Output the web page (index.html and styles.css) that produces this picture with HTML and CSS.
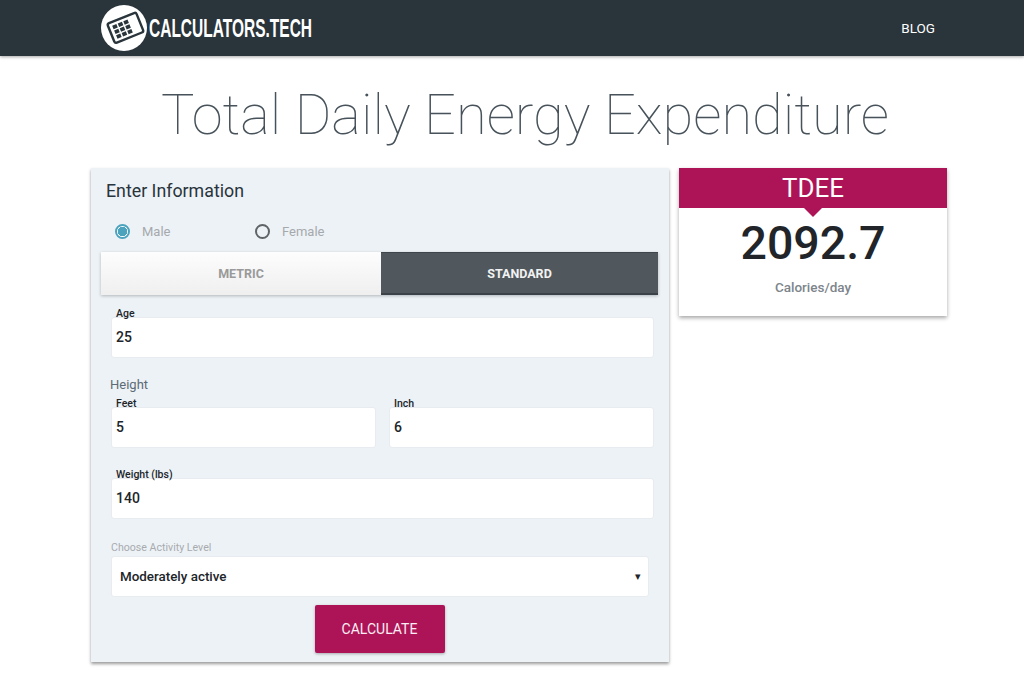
FILE: index.html
```html
<!DOCTYPE html>
<html lang="en">
<head>
  <meta charset="UTF-8">
  <meta name="viewport" content="width=device-width, initial-scale=1.0">
  <title>Total Daily Energy Expenditure</title>
  <link rel="stylesheet" href="styles.css">
</head>
<body>
  <!-- Top bar -->
  <header class="topbar">
    <a class="logo" href="#">
      <svg class="logo-icon" viewBox="0 0 46 46" width="46" height="46">
        <circle cx="23" cy="23" r="23" fill="#fff"/>
        <g transform="rotate(-22 24 23)">
          <rect x="9" y="12.5" width="31" height="21" rx="2" fill="none" stroke="#29343b" stroke-width="2.4"/>
          <g fill="#29343b">
            <rect x="13" y="16" width="4.5" height="3.8"/>
            <rect x="19" y="16" width="4.5" height="3.8"/>
            <rect x="25" y="16" width="4.5" height="3.8"/>
            <rect x="13" y="21.2" width="4.5" height="3.8"/>
            <rect x="19" y="21.2" width="4.5" height="3.8"/>
            <rect x="25" y="21.2" width="4.5" height="3.8"/>
            <rect x="13" y="26.4" width="4.5" height="3.8"/>
            <rect x="19" y="26.4" width="4.5" height="3.8"/>
            <rect x="25" y="26.4" width="4.5" height="3.8"/>
          </g>
        </g>
      </svg>
      <span class="logo-text">CALCULATORS.TECH</span>
    </a>
    <a class="nav-link" href="#">BLOG</a>
  </header>

  <h1 class="page-title">Total Daily Energy Expenditure</h1>

  <main class="columns">
    <!-- Form -->
    <section class="form-card">
      <h2 class="form-title">Enter Information</h2>
      <div class="gender-row">
        <label class="radio-item"><span class="radio radio-on"></span>Male</label>
        <label class="radio-item"><span class="radio"></span>Female</label>
      </div>
      <div class="unit-tabs">
        <button class="unit-tab">METRIC</button>
        <button class="unit-tab active">STANDARD</button>
      </div>

      <div class="field field-age">
        <label>Age</label>
        <input type="text" value="25">
      </div>

      <p class="group-label">Height</p>
      <div class="field-pair">
        <div class="field">
          <label>Feet</label>
          <input type="text" value="5">
        </div>
        <div class="field">
          <label>Inch</label>
          <input type="text" value="6">
        </div>
      </div>

      <div class="field field-weight">
        <label>Weight (lbs)</label>
        <input type="text" value="140">
      </div>

      <p class="select-label">Choose Activity Level</p>
      <div class="select-box">
        <span>Moderately active</span>
        <span class="select-arrow">▾</span>
      </div>

      <button class="btn-calc">CALCULATE</button>
    </section>

    <!-- Result -->
    <section class="result-card">
      <div class="result-head">TDEE</div>
      <div class="result-value">2092.7</div>
      <div class="result-unit">Calories/day</div>
    </section>
  </main>
</body>
</html>
```

FILE: styles.css
```css
* {
  box-sizing: border-box;
}
body {
  margin: 0;
  background: #fff;
  font-family: Roboto, sans-serif;
  color: #212529;
}
/* Top bar */
.topbar {
  height: 56px;
  background: #29343b;
  box-shadow: 0 1px 3px rgba(0, 0, 0, 0.35);
  display: flex;
  align-items: center;
  justify-content: space-between;
  padding: 0 89px 1px 101px;
}
.logo {
  display: flex;
  align-items: center;
  gap: 2px;
  color: #fff;
  text-decoration: none;
}
.logo-icon {
  display: block;
}
/* no condensed face installed, so the wordmark is squeezed */
.logo-text {
  display: block;
  width: 165px;
  font-family: "Liberation Sans", sans-serif;
  font-weight: 700;
  font-size: 25px;
  line-height: 46px;
  white-space: nowrap;
  transform: scaleX(0.62);
  transform-origin: left center;
}
.nav-link {
  color: #fff;
  font-size: 13.5px;
  text-decoration: none;
}
.page-title {
  margin: 24px 0 0;
  padding-left: 26px;
  text-align: center;
  font-size: 56px;
  line-height: 70px;
  font-weight: 100;
  color: #47525a;
}
/* Two columns */
.columns {
  display: flex;
  align-items: flex-start;
  gap: 10px;
  margin-top: 18px;
  padding: 0 0 19px 91px;
}
.form-card {
  width: 578px;
  height: 494px;
  padding: 0 11px 0 10px;
  background: #edf2f7;
  box-shadow: 0 2px 3px rgba(0, 0, 0, 0.4);
}
.form-title {
  margin: 0;
  padding: 12px 0 0 5px;
  font-size: 17.8px;
  line-height: 21px;
  font-weight: 400;
  color: #29343b;
}
.gender-row {
  display: flex;
  margin-top: 20px;
  height: 20px;
  padding-left: 14px;
}
.radio-item {
  display: flex;
  align-items: center;
  gap: 12px;
  width: 140px;
  font-size: 13px;
  color: #a6a9ac;
}
.radio {
  width: 15px;
  height: 15px;
  border: 2px solid #5f6467;
  border-radius: 50%;
}
.radio-on {
  border-color: #4ba3bd;
  background: radial-gradient(circle, #4ba3bd 0 4.5px, #fff 5px);
}
.unit-tabs {
  display: flex;
  margin-top: 11px;
  height: 43px;
  box-shadow: 0 1px 3px rgba(0, 0, 0, 0.25);
}
.unit-tab {
  flex: 0 0 280px;
  border: none;
  font-family: inherit;
  font-size: 12.5px;
  font-weight: 700;
  color: #9a9a9a;
  background: linear-gradient(to bottom, #fdfdfd, #efefef);
}
.unit-tab.active {
  flex: 0 0 277px;
  color: #f2f2f2;
  background: #50585d;
  border-top: 1px solid #3f464b;
  border-bottom: 2px solid #3c4348;
}
/* Inputs */
.field {
  position: relative;
  flex: 1;
}
.field label {
  position: absolute;
  left: 5px;
  top: -10px;
  font-size: 10.5px;
  line-height: 13px;
  font-weight: 500;
  color: #212529;
}
.field input {
  display: block;
  width: 100%;
  height: 41px;
  padding: 0 4px 2px;
  border: 1px solid #e8ebef;
  border-radius: 3px;
  background: #fff;
  font-family: inherit;
  font-size: 14px;
  font-weight: 500;
  color: #212529;
}
.field-age {
  margin: 22px 4px 0 10px;
}
.group-label {
  margin: 19px 0 0 9px;
  font-size: 13px;
  line-height: 16px;
  color: #5c6b75;
}
.field-pair {
  display: flex;
  gap: 13px;
  margin: 14px 4px 0 10px;
}
.field-weight {
  margin: 30px 4px 0 10px;
}
.select-label {
  margin: 22px 0 0 10px;
  font-size: 10.6px;
  line-height: 14px;
  color: #a8abae;
}
.select-box {
  display: flex;
  align-items: center;
  justify-content: space-between;
  height: 41px;
  margin: 1px 9px 0 10px;
  padding: 0 7px 0 8px;
  background: #fff;
  border: 1px solid #e8ebef;
  border-radius: 3px;
  font-size: 13.4px;
  font-weight: 500;
  color: #212529;
}
.select-arrow {
  font-size: 11px;
}
.btn-calc {
  display: block;
  width: 130px;
  height: 48px;
  margin: 8px auto 0;
  border: none;
  border-radius: 2px;
  background: #ad1457;
  box-shadow: 0 1px 3px rgba(0, 0, 0, 0.3);
  color: #fbeef4;
  font-family: inherit;
  font-size: 14px;
}
/* Result card */
.result-card {
  width: 268px;
  height: 148px;
  background: #fff;
  box-shadow: 0 2px 4px rgba(0, 0, 0, 0.35);
  text-align: center;
}
.result-head {
  position: relative;
  height: 40px;
  background: #ad1457;
  color: #fff;
  font-size: 26px;
  line-height: 40px;
}
.result-head::after {
  content: "";
  position: absolute;
  left: 50%;
  bottom: -9px;
  margin-left: -9px;
  border-left: 9px solid transparent;
  border-right: 9px solid transparent;
  border-top: 9px solid #ad1457;
}
.result-value {
  margin-top: 9px;
  font-size: 46.5px;
  line-height: 52px;
  font-weight: 500;
  color: #212529;
}
.result-unit {
  margin-top: 10px;
  font-size: 13.5px;
  line-height: 16px;
  font-weight: 500;
  color: #7d858b;
}
```
